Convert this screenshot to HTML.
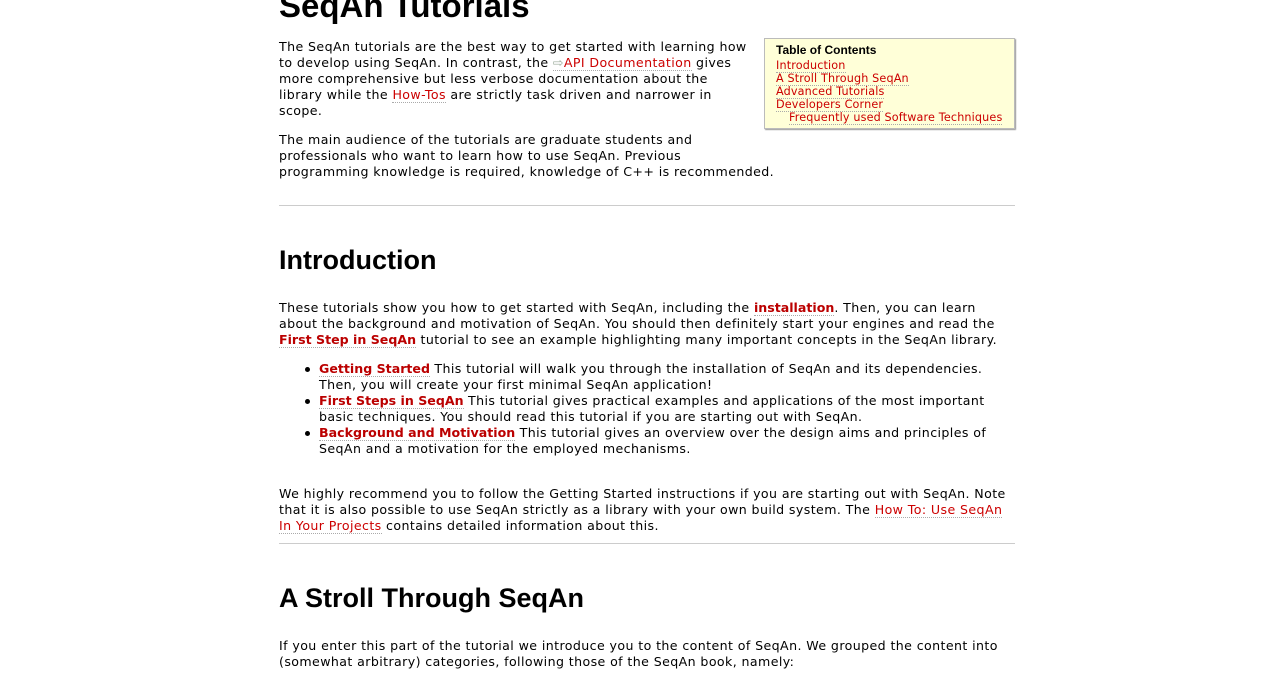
<!DOCTYPE html>
<html><head><meta charset="utf-8"><style>
body{margin:0;width:1276px;height:683px;overflow:hidden;background:#fff;font-family:"DejaVu Sans","Liberation Sans",sans-serif;font-size:12.6px;color:#000;letter-spacing:0.4px}
.l{position:absolute;white-space:nowrap;line-height:16px}
a{color:#c00;text-decoration:none;border-bottom:1px dotted #aaa}
b a,a b{color:#b00;letter-spacing:0}
h1,h2{position:absolute;margin:0;font-family:"Liberation Sans",sans-serif;font-weight:bold;white-space:nowrap;letter-spacing:0}
h1{font-size:33px;top:-13px;left:279px}
h2{font-size:27px;left:279px}
.hr{position:absolute;left:279px;width:736px;height:1px;background:#ccc}
.toc{position:absolute;left:764px;top:38px;width:249px;height:89px;background:#ffffd8;border:1px solid #bbb;box-shadow:1px 1px 1px #999}
.toc div{position:absolute;white-space:nowrap;line-height:13px;font-size:11.2px;letter-spacing:0.15px}
.bul{position:absolute;left:305px;width:5px;height:5px;border-radius:50%;background:#000}
</style></head><body>
<h1>SeqAn Tutorials</h1>
<div class="l" style="left:279px;top:39px">The SeqAn tutorials are the best way to get started with learning how</div>
<div class="l" style="left:279px;top:55px">to develop using SeqAn. In contrast, the <a><span style="color:#9a9">⇨</span>API Documentation</a> gives</div>
<div class="l" style="left:279px;top:71px">more comprehensive but less verbose documentation about the</div>
<div class="l" style="left:279px;top:87px">library while the <a>How-Tos</a> are strictly task driven and narrower in</div>
<div class="l" style="left:279px;top:103px">scope.</div>
<div class="l" style="left:279px;top:132px">The main audience of the tutorials are graduate students and</div>
<div class="l" style="left:279px;top:148px">professionals who want to learn how to use SeqAn. Previous</div>
<div class="l" style="left:279px;top:164px">programming knowledge is required, knowledge of C++ is recommended.</div>
<div class="toc">
<div style="left:11px;top:5px;font-family:'Liberation Sans',sans-serif;font-weight:bold;font-size:12px;letter-spacing:0">Table of Contents</div>
<div style="left:11px;top:20px"><a>Introduction</a></div>
<div style="left:11px;top:33px"><a>A Stroll Through SeqAn</a></div>
<div style="left:11px;top:46px"><a>Advanced Tutorials</a></div>
<div style="left:11px;top:59px"><a>Developers Corner</a></div>
<div style="left:24px;top:72px"><a>Frequently used Software Techniques</a></div>
</div>
<div class="hr" style="top:205px"></div>
<h2 style="top:245px">Introduction</h2>
<div class="l" style="left:279px;top:300px">These tutorials show you how to get started with SeqAn, including the <b><a>installation</a></b>. Then, you can learn</div>
<div class="l" style="left:279px;top:316px">about the background and motivation of SeqAn. You should then definitely start your engines and read the</div>
<div class="l" style="left:279px;top:332px"><b><a>First Step in SeqAn</a></b> tutorial to see an example highlighting many important concepts in the SeqAn library.</div>
<div class="bul" style="top:367px"></div>
<div class="l" style="left:319px;top:361px"><b><a>Getting Started</a></b> This tutorial will walk you through the installation of SeqAn and its dependencies.</div>
<div class="l" style="left:319px;top:377px">Then, you will create your first minimal SeqAn application!</div>
<div class="bul" style="top:399px"></div>
<div class="l" style="left:319px;top:393px"><b><a>First Steps in SeqAn</a></b> This tutorial gives practical examples and applications of the most important</div>
<div class="l" style="left:319px;top:409px">basic techniques. You should read this tutorial if you are starting out with SeqAn.</div>
<div class="bul" style="top:431px"></div>
<div class="l" style="left:319px;top:425px"><b><a>Background and Motivation</a></b> This tutorial gives an overview over the design aims and principles of</div>
<div class="l" style="left:319px;top:441px">SeqAn and a motivation for the employed mechanisms.</div>
<div class="l" style="left:279px;top:486px">We highly recommend you to follow the Getting Started instructions if you are starting out with SeqAn. Note</div>
<div class="l" style="left:279px;top:502px">that it is also possible to use SeqAn strictly as a library with your own build system. The <a>How To: Use SeqAn</a></div>
<div class="l" style="left:279px;top:518px"><a>In Your Projects</a> contains detailed information about this.</div>
<div class="hr" style="top:543px"></div>
<h2 style="top:583px">A Stroll Through SeqAn</h2>
<div class="l" style="left:279px;top:638px">If you enter this part of the tutorial we introduce you to the content of SeqAn. We grouped the content into</div>
<div class="l" style="left:279px;top:654px">(somewhat arbitrary) categories, following those of the SeqAn book, namely:</div>
</body></html>
